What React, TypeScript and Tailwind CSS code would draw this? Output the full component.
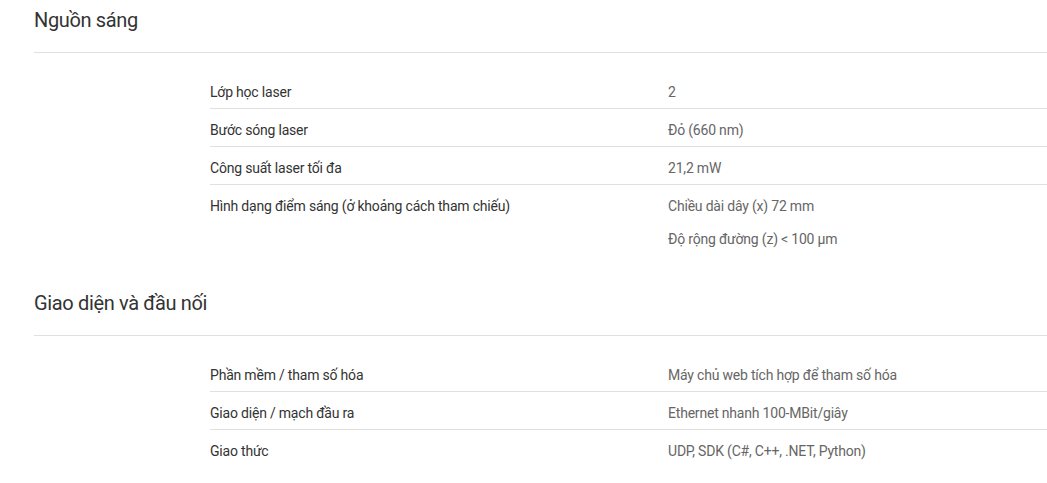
type Row = { label: string; values: string[] };
type Section = { title: string; rows: Row[] };

const sections: Section[] = [
  {
    title: "Nguồn sáng",
    rows: [
      { label: "Lớp học laser", values: ["2"] },
      { label: "Bước sóng laser", values: ["Đỏ (660 nm)"] },
      { label: "Công suất laser tối đa", values: ["21,2 mW"] },
      {
        label: "Hình dạng điểm sáng (ở khoảng cách tham chiếu)",
        values: ["Chiều dài dây (x) 72 mm", "Độ rộng đường (z) < 100 µm"],
      },
    ],
  },
  {
    title: "Giao diện và đầu nối",
    rows: [
      { label: "Phần mềm / tham số hóa", values: ["Máy chủ web tích hợp để tham số hóa"] },
      { label: "Giao diện / mạch đầu ra", values: ["Ethernet nhanh 100-MBit/giây"] },
      { label: "Giao thức", values: ["UDP, SDK (C#, C++, .NET, Python)"] },
    ],
  },
];

export default function App() {
  return (
    <div className="w-full bg-white pl-[34px] font-['Roboto',sans-serif]">
      {sections.map((s, si) => (
        <section key={s.title} className={si === 0 ? "" : "mt-[28px]"}>
          <h2 className="border-b border-[#e0e0e0] pt-[6px] pb-[18px] text-[20px] leading-7 font-normal tracking-[-0.35px] text-[#333333]">
            {s.title}
          </h2>
          <div className="mt-[18px] ml-[176px]">
            {s.rows.map((r, ri) => (
              <div
                key={r.label}
                className={
                  "flex pt-[11px] pb-[6px] text-[14px] leading-5 tracking-[-0.2px] " +
                  (ri === s.rows.length - 1 ? "" : "border-b border-[#e0e0e0]")
                }
              >
                <div className="w-[458px] shrink-0 text-[#333333]">{r.label}</div>
                <div className="flex flex-col gap-[13px] text-[#666666]">
                  {r.values.map((v) => (
                    <p key={v}>{v}</p>
                  ))}
                </div>
              </div>
            ))}
          </div>
        </section>
      ))}
    </div>
  );
}
